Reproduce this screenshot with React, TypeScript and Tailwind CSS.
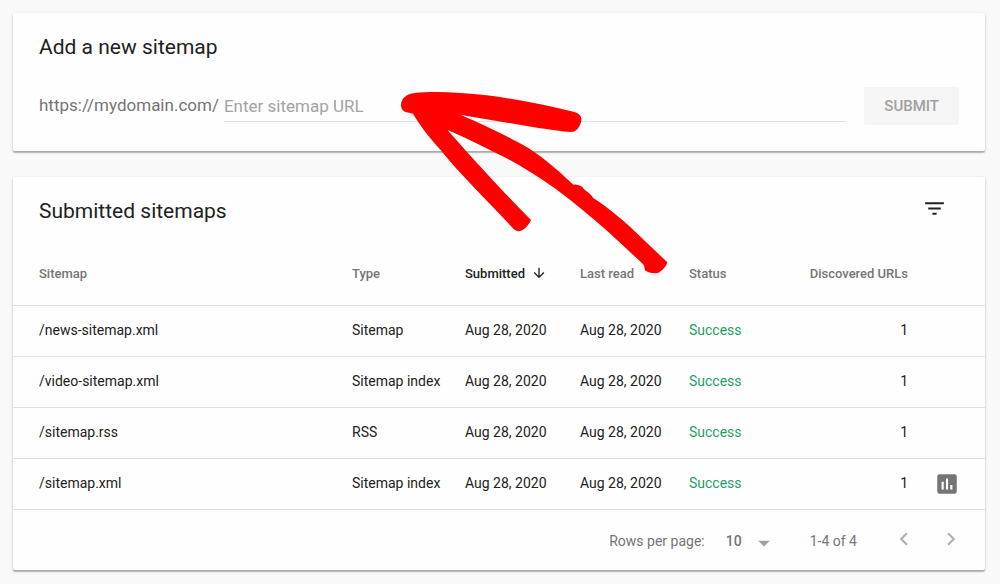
import {
  MdArrowDownward,
  MdArrowDropDown,
  MdAssessment,
  MdChevronLeft,
  MdChevronRight,
  MdFilterList,
} from "react-icons/md";

const sitemaps = [
  { path: "/news-sitemap.xml", type: "Sitemap", report: false },
  { path: "/video-sitemap.xml", type: "Sitemap index", report: false },
  { path: "/sitemap.rss", type: "RSS", report: false },
  { path: "/sitemap.xml", type: "Sitemap index", report: true },
];

const cardClass =
  "rounded-xs bg-[#fefefe] shadow-[0_1px_3px_rgba(0,0,0,0.22),0_2px_1px_rgba(0,0,0,0.2)]";

// Hand drawn arrow that points at the URL field
function Arrow() {
  return (
    <svg
      className="pointer-events-none absolute top-20 left-[390px] h-[200px] w-[290px]"
      viewBox="0 0 870 600"
      fill="#ff0000"
      aria-hidden="true"
    >
      <path d="M33 76 C34 55 48 42 75 39 C130 33 215 37 290 46 C380 57 470 76 550 95 C568 100 576 108 574 122 C570 140 560 156 542 156 C515 155 490 150 450 145 L210 104 C270 128 330 158 390 190 C455 226 500 268 550 314 C560 313 570 315 578 322 C580 330 600 338 609 353 C650 380 685 408 720 440 L832 547 C828 562 816 572 806 578 C792 583 775 578 765 571 C763 565 764 560 761 554 C700 498 640 440 575 388 C500 325 430 278 350 235 C290 205 235 176 173 150 C220 205 310 305 423 420 C415 438 402 450 388 454 C380 454 375 450 370 446 C290 360 205 278 150 208 C118 172 92 140 69 101 C56 98 47 98 42 94 C36 89 33 84 33 76 Z" />
    </svg>
  );
}

function AddSitemap() {
  return (
    <section className={cardClass}>
      <h2 className="flex h-[68px] items-center px-[26px] pt-0.5 text-[21px] text-[#212121]">
        Add a new sitemap
      </h2>
      <form
        className="flex items-center px-[26px] pt-1.5 pb-[26px]"
        onSubmit={(e) => e.preventDefault()}
      >
        <label htmlFor="sitemap-url" className="text-[17px] text-[#757575]">
          https://mydomain.com/
        </label>
        <input
          id="sitemap-url"
          type="text"
          placeholder="Enter sitemap URL"
          className="mr-[18px] ml-[5px] h-8 min-w-0 flex-1 border-b border-[#e0e0e0] bg-transparent text-[17px] outline-none placeholder:text-[#a3a3a3]"
        />
        <button
          type="submit"
          className="h-[38px] rounded-xs bg-[#f5f5f5] px-5 text-[15px] font-medium text-[#a0a0a0]"
        >
          SUBMIT
        </button>
      </form>
    </section>
  );
}

function SubmittedSitemaps() {
  return (
    <section className={cardClass}>
      <div className="flex h-[68px] items-center justify-between pt-0.5 pr-[38px] pl-[26px]">
        <h2 className="text-[21px] text-[#212121]">Submitted sitemaps</h2>
        <button type="button" aria-label="Filter" className="pb-2 text-[#212121]">
          <MdFilterList size={25} />
        </button>
      </div>

      <table className="w-full table-fixed text-left text-sm text-[#212121]">
        <colgroup>
          <col />
          <col className="w-[113px]" />
          <col className="w-[115px]" />
          <col className="w-[109px]" />
          <col className="w-[90px]" />
          <col className="w-[129px]" />
          <col className="w-[77px]" />
        </colgroup>
        <thead>
          <tr className="h-[60px] border-b border-[#e0e0e0] text-[13px] text-[#757575]">
            <th className="pl-[26px] font-medium">Sitemap</th>
            <th className="font-medium">Type</th>
            <th className="font-medium text-[#212121]" aria-sort="descending">
              <button type="button" className="flex items-center gap-1.5">
                Submitted
                <MdArrowDownward size={16} className="mb-1" />
              </button>
            </th>
            <th className="font-medium">Last read</th>
            <th className="font-medium">Status</th>
            <th className="text-right font-medium">Discovered URLs</th>
            <td></td>
          </tr>
        </thead>
        <tbody>
          {sitemaps.map((item) => (
            <tr key={item.path} className="h-[51px] border-b border-[#e0e0e0]">
              <td className="pb-0.5 pl-[26px]">{item.path}</td>
              <td className="pb-0.5">{item.type}</td>
              <td className="pb-0.5">Aug 28, 2020</td>
              <td className="pb-0.5">Aug 28, 2020</td>
              <td className="pb-0.5 text-[#1e9e64]">Success</td>
              <td className="pb-0.5 text-right">1</td>
              <td className="pl-[26px]">
                {item.report && (
                  <button
                    type="button"
                    aria-label="See index coverage"
                    className="block text-[#757575]"
                  >
                    <MdAssessment size={26} />
                  </button>
                )}
              </td>
            </tr>
          ))}
        </tbody>
      </table>

      {/* Pagination */}
      <div className="flex h-[60px] items-center justify-end pt-0.5 pr-[21px] text-sm text-[#757575]">
        <label htmlFor="rows">Rows per page:</label>
        <div className="relative ml-[21px] flex items-center">
          <select
            id="rows"
            defaultValue="10"
            className="w-[52px] appearance-none bg-transparent font-medium outline-none"
          >
            <option>10</option>
            <option>25</option>
            <option>50</option>
          </select>
          <MdArrowDropDown
            size={28}
            className="pointer-events-none absolute -top-0.5 right-0 text-[#9e9e9e]"
          />
        </div>
        <span className="ml-8">1-4 of 4</span>
        <div className="ml-[34px] flex gap-[21px] pb-1 text-[#b0b0b0]">
          <button type="button" aria-label="Previous page">
            <MdChevronLeft size={26} />
          </button>
          <button type="button" aria-label="Next page">
            <MdChevronRight size={26} />
          </button>
        </div>
      </div>
    </section>
  );
}

export default function App() {
  return (
    <main className="relative flex min-h-screen flex-col gap-[26px] bg-[#f9f9f9] py-[13px] pr-[15px] pl-[13px] font-[Roboto,sans-serif]">
      <AddSitemap />
      <SubmittedSitemaps />
      <Arrow />
    </main>
  );
}
